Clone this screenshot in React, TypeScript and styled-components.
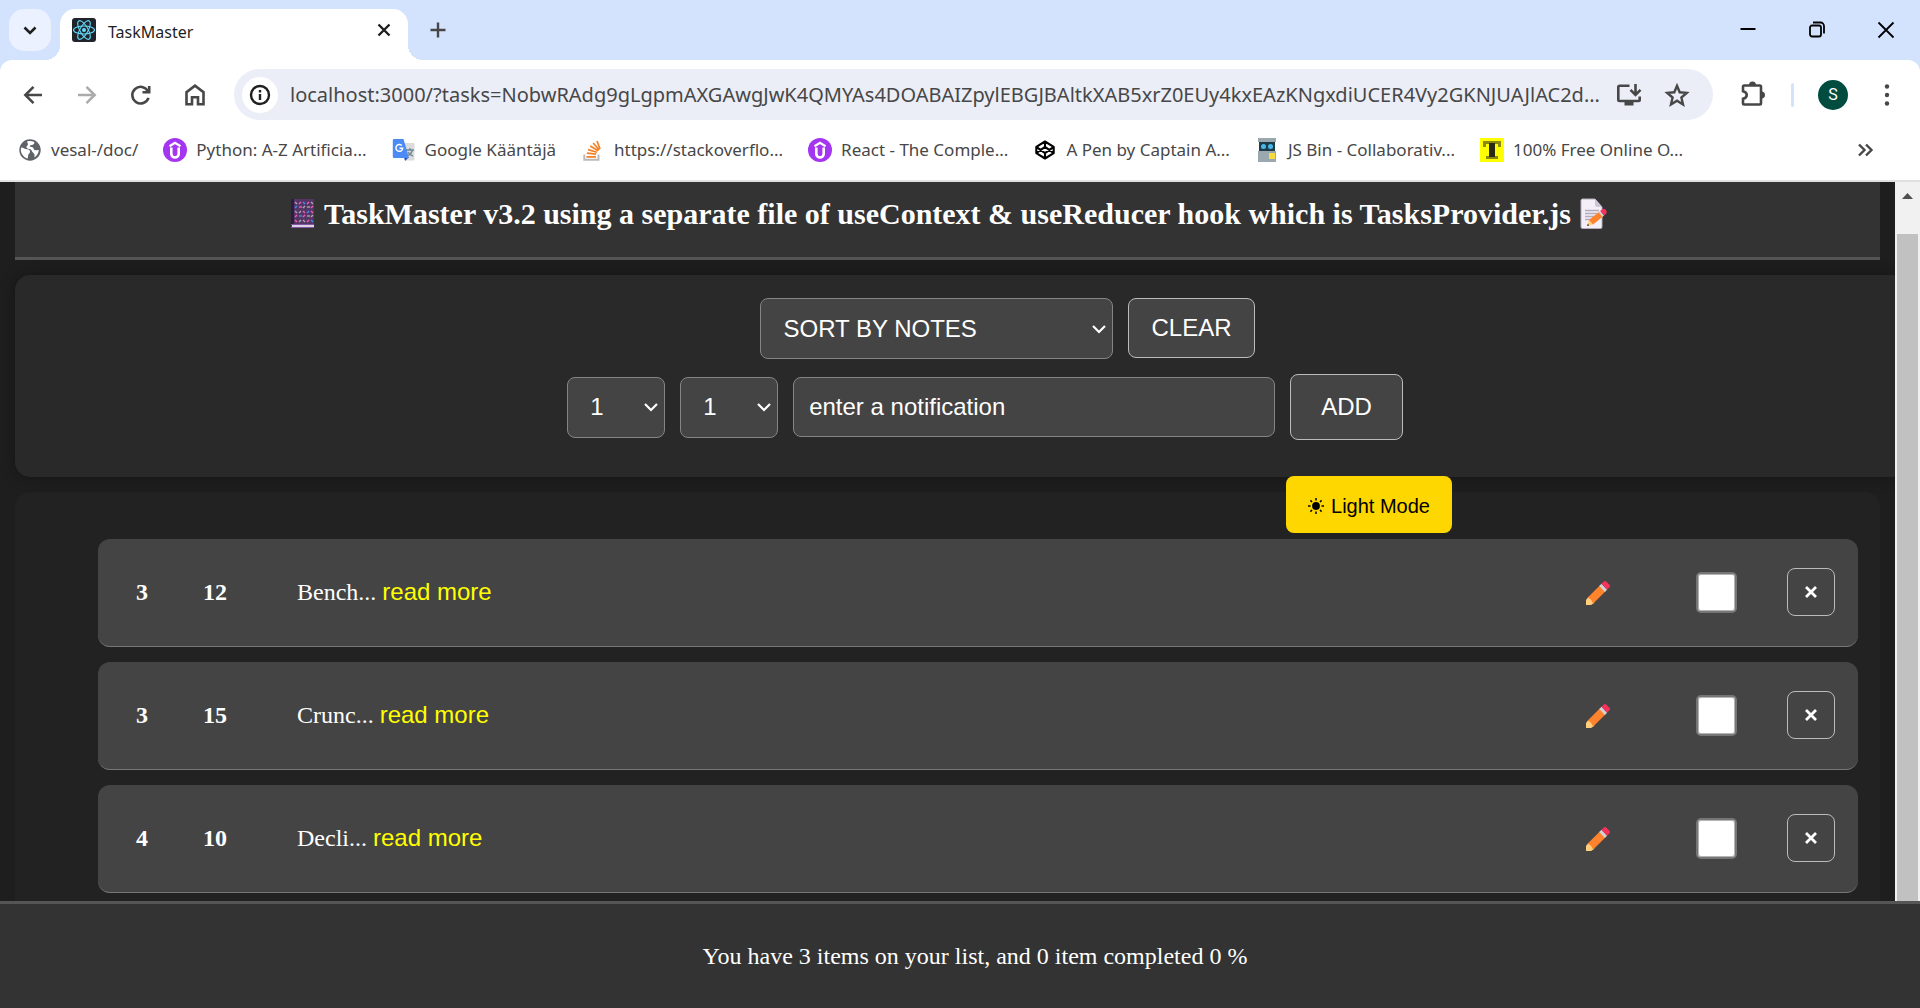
import React from "react";
import styled, { createGlobalStyle } from "styled-components";

const sans = `"Liberation Sans", Arial, sans-serif`;
const serif = `"Liberation Serif", "Times New Roman", serif`;
const chrome = `"Noto Sans", "Segoe UI", sans-serif`;

const GlobalStyle = createGlobalStyle`
  *, *::before, *::after { box-sizing: border-box; }
  body { margin: 0; background: #1e1e1e; }
  button, input, select { font: inherit; color: inherit; margin: 0; }
  button { cursor: pointer; }
  svg { display: block; flex: none; }
`;

const Window = styled.div`
  display: flex;
  flex-direction: column;
  min-height: 100vh;
  overflow: hidden;
`;

/* ---------- browser frame ---------- */

const BrowserFrame = styled.header`
  background: #d3e3fd;
  color: #474747;
  font-family: ${chrome};
`;

const TabStrip = styled.div`
  display: flex;
  align-items: center;
  height: 60px;
  padding-left: 9px;
`;

const PlainButton = styled.button`
  display: flex;
  align-items: center;
  justify-content: center;
  padding: 0;
  border: 0;
  background: none;
`;

const TabSearch = styled(PlainButton)`
  width: 42px;
  height: 42px;
  border-radius: 15px;
  background: #ebf1fe;
  color: #1f1f1f;
`;

const Tab = styled.div`
  position: relative;
  display: flex;
  align-items: center;
  align-self: flex-end;
  width: 348px;
  height: 51px;
  margin-left: 9px;
  padding: 0 12px 9px;
  border-radius: 15px 15px 0 0;
  background: #fff;
  color: #1f1f1f;
  font-size: 16px;

  &::before,
  &::after {
    content: "";
    position: absolute;
    bottom: 0;
    width: 15px;
    height: 15px;
  }
  &::before {
    right: 100%;
    background: radial-gradient(circle at 0 0, transparent 15px, #fff 15px);
  }
  &::after {
    left: 100%;
    background: radial-gradient(circle at 100% 0, transparent 15px, #fff 15px);
  }
`;

const TabTitle = styled.span`
  flex: 1;
  margin-left: 12px;
  padding-top: 3px;
  line-height: 24px;
`;

const TabClose = styled(PlainButton)`
  width: 24px;
  height: 24px;
`;

const NewTab = styled(PlainButton)`
  width: 42px;
  height: 42px;
  margin-left: 9px;
`;

const WindowControls = styled.div`
  display: flex;
  margin-left: auto;
  color: #000;
`;

const WindowButton = styled(PlainButton)`
  width: 69px;
  height: 60px;
`;

const Toolbar = styled.div`
  display: flex;
  align-items: center;
  height: 60px;
  padding: 9px 6px 0;
  border-radius: 12px 12px 0 0;
  background: #fff;
`;

const ToolButton = styled(PlainButton)<{ $faded?: boolean }>`
  width: 54px;
  height: 51px;
  color: ${(p) => (p.$faded ? "#ababab" : "#474747")};
`;

const AddressBar = styled.div`
  display: flex;
  flex: 1;
  align-items: center;
  min-width: 0;
  height: 51px;
  margin: 0 12px;
  padding: 0 12px 0 8px;
  border-radius: 26px;
  background: #ebeef7;
`;

const SiteInfo = styled(PlainButton)`
  width: 36px;
  height: 36px;
  border-radius: 50%;
  background: #fff;
  color: #1f1f1f;
`;

const AddressInput = styled.input`
  flex: 1;
  min-width: 0;
  margin-left: 12px;
  padding: 0;
  border: 0;
  outline: 0;
  background: none;
  font-size: 20px;
`;

const AddressButton = styled(PlainButton)`
  width: 48px;
  height: 48px;
`;

const Divider = styled.span`
  width: 3px;
  height: 24px;
  margin: 0 12px;
  border-radius: 2px;
  background: #d3e3fd;
`;

const Avatar = styled.span`
  display: flex;
  align-items: center;
  justify-content: center;
  width: 30px;
  height: 30px;
  border-radius: 50%;
  background: #004d40;
  color: #fff;
  font: 16px Roboto, sans-serif;
`;

const BookmarkBar = styled.nav`
  display: flex;
  align-items: center;
  height: 62px;
  padding: 0 27px 0 18px;
  border-bottom: 2px solid #e0e0e0;
  background: #fff;
`;

const BookmarkList = styled.ul`
  display: flex;
  flex: 1;
  gap: 25px;
  min-width: 0;
  margin: 0;
  padding: 0;
  list-style: none;
`;

const Bookmark = styled.a`
  display: flex;
  align-items: center;
  gap: 9px;
  color: #474747;
  font-size: 17px;
  line-height: 24px;
  text-decoration: none;
  white-space: nowrap;
`;

/* ---------- page ---------- */

const Viewport = styled.div`
  display: flex;
  flex: 1;
  background: #1e1e1e;
  color: #fff;
`;

const Page = styled.main`
  flex: 1;
  min-width: 0;
  padding: 0 15px;
  overflow: hidden;
`;

const PageHeader = styled.header`
  padding: 15px 0 26px;
  border-bottom: 3px solid #555;
  background: #333;
`;

const Title = styled.h1`
  display: flex;
  align-items: center;
  justify-content: center;
  gap: 7px;
  margin: 0;
  font: bold 30px/34px ${serif};
`;

const Controls = styled.section`
  margin: 15px -75px 0 0;
  padding: 23px 0 37px;
  border-radius: 15px;
  background: #292929;
  box-shadow: 0 0 15px rgba(0, 0, 0, 0.3);
  font: 24px/28px ${sans};
`;

const ControlRow = styled.form<{ $indent?: boolean }>`
  display: flex;
  align-items: ${(p) => (p.$indent ? "flex-start" : "center")};
  justify-content: center;
  gap: 15px;
  padding-left: ${(p) => (p.$indent ? 45 : 0)}px;

  & + & {
    margin-top: 15px;
  }
`;

const SelectBox = styled.label<{ $wide?: boolean }>`
  display: grid;
  align-items: center;
  width: ${(p) => (p.$wide ? 353 : 98)}px;

  > * {
    grid-area: 1 / 1;
  }
  > svg {
    justify-self: end;
    margin-right: 6px;
    pointer-events: none;
  }
`;

const Select = styled.select`
  width: 100%;
  height: 61px;
  padding: 0 22px;
  appearance: none;
  border: 1px solid #858585;
  border-radius: 8px;
  background: #444;
`;

const NoteInput = styled.input`
  width: 482px;
  height: 60px;
  padding: 0 15px;
  border: 1px solid #858585;
  border-radius: 8px;
  background: #444;

  &::placeholder {
    color: #fff;
    opacity: 1;
  }
`;

const ActionButton = styled.button<{ $large?: boolean }>`
  height: ${(p) => (p.$large ? 66 : 60)}px;
  padding: 0 ${(p) => (p.$large ? 30 : 22)}px;
  border: 1px solid #bbb;
  border-radius: 8px;
  background: #444;
`;

const ListPanel = styled.section`
  position: relative;
  margin-top: 15px;
  padding: 47px 22px 8px 83px;
  border-radius: 15px 15px 0 0;
  background: #222;
`;

const ThemeButton = styled.button`
  position: absolute;
  top: -16px;
  right: 428px;
  display: flex;
  align-items: center;
  gap: 7px;
  height: 57px;
  padding: 3px 22px 0;
  border: 0;
  border-radius: 8px;
  background: #ffd700;
  color: #000;
  font: 20px ${sans};
`;

const TaskList = styled.ul`
  display: grid;
  gap: 15px;
  margin: 0;
  padding: 0;
  list-style: none;
`;

const TaskRow = styled.li`
  display: flex;
  align-items: center;
  height: 108px;
  padding: 0 23px 1px 38px;
  border-bottom: 1px solid #777;
  border-radius: 12px;
  background: #444;
  font: 24px/28px ${serif};
`;

const Quantity = styled.strong`
  width: 67px;
`;

const Amount = styled.strong`
  width: 94px;
`;

const Note = styled.p`
  flex: 1;
  margin: 0;
`;

const ReadMore = styled.button`
  padding: 0;
  border: 0;
  background: none;
  color: #ff0;
  font: 24px/28px ${sans};
`;

const EditButton = styled(PlainButton)`
  width: 24px;
  height: 48px;
`;

const Done = styled.input`
  width: 41px;
  height: 41px;
  margin: 0 50px 0 86px;
  appearance: none;
  border: 2px solid #767676;
  border-radius: 5px;
  background: #fff;
  box-shadow: inset 0 0 0 1px #b5b5b5;
`;

const RemoveButton = styled(PlainButton)`
  width: 48px;
  height: 48px;
  border: 1px solid #bbb;
  border-radius: 8px;
`;

const Scrollbar = styled.div`
  width: 25px;
  padding: 0 2px;
  background: #f1f1f1;
  display: flex;
  flex-direction: column;
`;

const ScrollUp = styled(PlainButton)`
  height: 27px;
`;

const ScrollThumb = styled.div`
  flex: 1;
  margin-top: 25px;
  background: #c1c1c1;
`;

const Footer = styled.footer`
  padding: 38px 0 38px 30px;
  border-top: 3px solid #555;
  background: #333;
  color: #fff;
  font: 24px/28px ${serif};
  text-align: center;
`;

/* ---------- icons ---------- */

type IconProps = { size?: number; width?: number; children: React.ReactNode };

const Line = ({ size = 24, width = 2, children }: IconProps) => (
  <svg width={size} height={size} viewBox={`0 0 ${size} ${size}`} fill="none" stroke="currentColor" strokeWidth={width} aria-hidden="true">
    {children}
  </svg>
);

const Chevron = () => (
  <Line size={16}>
    <path d="M2 5l6 6 6-6" strokeWidth="2.2" />
  </Line>
);

const ReactLogo = () => (
  <svg width="24" height="24" viewBox="0 0 24 24" aria-hidden="true">
    <rect width="24" height="24" rx="3" fill="#20232a" />
    <g fill="none" stroke="#61dafb" strokeWidth="1.1" transform="translate(12 12)">
      <ellipse rx="10.500" ry="4" />
      <ellipse rx="10.500" ry="4" transform="rotate(60)" />
      <ellipse rx="10.500" ry="4" transform="rotate(120)" />
      <circle r="2" fill="#61dafb" stroke="none" />
    </g>
  </svg>
);

const GlobeIcon = () => (
  <svg width="24" height="24" viewBox="0 0 24 24" aria-hidden="true">
    <circle cx="12" cy="12" r="10.7" fill="#5f6368" />
    <path d="M3.2 9.6c2.6.2 3.6 1.6 6.2 1.6 1.8.1 3 1.4 2.6 3.1-.4 1.4-1.6 1.5-1.8 2.9-.1 1-.3 2.4-.5 3.4-3.6-1-6.4-4.500-6.900-8.200z" fill="#fff" />
    <path d="M9.200 3.400C11.500 2.700 14.200 2.900 16.300 4c.3 1.800-.7 2.800-2.600 2.900-1.600.1-2 .8-1.900 1.900 2.400-.2 3.500.6 3.900 2.100.5 1.400 2.600 1.300 5.100 1.200-.2 3.200-1.900 5.700-4.400 7.300.5-2.700-.1-3.900-1.500-4.900-1.400-1-.7-2.400-2.100-3.100-1.700-.8-3.800-.3-4.300-1.800-.5-1.700 1.600-1.800 1.500-3.600 0-1-1.100-1.200-.8-2.600z" fill="#fff" />
  </svg>
);

const UdemyIcon = () => (
  <svg width="24" height="24" viewBox="0 0 24 24" aria-hidden="true">
    <circle cx="12" cy="12" r="12" fill="#a435f0" />
    <path d="M6.500 8.200L12 4.700l5.500 3.500" fill="none" stroke="#fff" strokeWidth="2.200" />
    <path d="M8.300 9.500v6.200c0 5 7.400 5 7.400 0V9.500" fill="none" stroke="#fff" strokeWidth="2.600" />
  </svg>
);

const TranslateIcon = () => (
  <svg width="24" height="24" viewBox="0 0 24 24" aria-hidden="true">
    <path d="M9 5h12.500a1 1 0 0 1 1 1v15.500a1 1 0 0 1-1 1H14z" fill="#dcdcdc" />
    <path d="M14 12h8M18 10v2M20.500 12c-.8 3-3 5-5.500 6M16 14c1 2 3 3.500 5 4" stroke="#6e8791" strokeWidth="1.300" fill="none" />
    <path d="M12 19h5l-4 4z" fill="#1a4fc4" />
    <path d="M2 1h9.500l5.500 19H2a1.200 1.200 0 0 1-1.200-1.200V2.200A1.200 1.200 0 0 1 2 1z" fill="#4c8bf5" />
    <path d="M9.800 7.600a3.400 3.400 0 1 0 .9 2.600H7.500" fill="none" stroke="#fff" strokeWidth="1.500" />
  </svg>
);

const StackIcon = () => (
  <svg width="24" height="24" viewBox="0 0 24 24" fill="none" aria-hidden="true">
    <path d="M3.300 16.500v5.300h14.200v-5.300" stroke="#bcbbbb" strokeWidth="2" />
    <path d="M5.500 18.800h9.500M5.800 15.200l9.400 1M7 11.600l9 2.600M9.200 8l8 4.800M12.200 5l6 7M16 3l3 8" stroke="#f48024" strokeWidth="1.700" />
  </svg>
);

const CodepenIcon = () => (
  <svg width="24" height="24" viewBox="-2 0 24 24" fill="none" stroke="#000" strokeWidth="2.100" strokeLinejoin="round" aria-hidden="true">
    <path d="M10 3.500l8.700 5.400v6.200L10 20.500l-8.700-5.400V8.900zM10 3.500v5.400M10 15.100v5.400M1.300 8.900L10 15.100l8.700-6.200M1.300 15.100L10 8.900l8.700 6.200" />
  </svg>
);

const JsBinIcon = () => (
  <svg width="24" height="24" viewBox="-3 0 24 24" aria-hidden="true">
    <path d="M0 0h18v4H0zM0 13h18v11H0z" fill="#9ba8b0" />
    <path d="M1 4h16v9H1z" fill="#1d3c48" />
    <circle cx="5.500" cy="8.500" r="2.500" fill="#49b8e8" />
    <circle cx="12.500" cy="8.500" r="2.500" fill="#49b8e8" />
    <path d="M11 15h6v6h-6z" fill="#f5dc3c" />
  </svg>
);

const TypeIcon = () => (
  <svg width="24" height="24" viewBox="0 0 24 24" aria-hidden="true">
    <path d="M0 0h24v24H0z" fill="#ff0" />
    <path d="M3 3h18v6h-3V6H6v3H3z" fill="#8a8a10" />
    <path d="M6 18h12v3H6z" fill="#8a8a10" />
    <path d="M9 5h6v14H9z" fill="#2b2b14" />
  </svg>
);

const NotebookIcon = () => {
  const tones = ["#a9a4ad", "#f45ea9", "#3f8cf5", "#f45ea9", "#a9a4ad"];
  return (
    <svg width="32" height="34" viewBox="0 0 32 34" aria-hidden="true">
      <rect x="6" y="2" width="23" height="29" rx="1" fill="#533566" />
      <path d="M6 2h3v26H6z" fill="#2f1b41" />
      <path d="M7 28h22v2H7z" fill="#dcd4e4" />
      <path d="M6 27h23v1H6zM6 30h23v1H6z" fill="#8256a3" />
      {[5, 9, 14, 18, 23].map((y, r) =>
        [10, 14, 18, 22, 26].map((x, c) => (
          <path key={`${x}-${y}`} d={(r + c) % 2 ? `M${x} ${y + 2}l2-2` : r % 2 ? `M${x} ${y + 1}h3` : `M${x} ${y}l2 2`} stroke={tones[(r * 2 + c) % 5]} strokeWidth="1.400" />
        )),
      )}
    </svg>
  );
};

const MemoIcon = () => (
  <svg width="32" height="34" viewBox="0 0 32 34" aria-hidden="true">
    <path d="M4 2h13l7 8v20a1.500 1.500 0 0 1-1.500 1.500h-18A1.500 1.500 0 0 1 3 30V3z" fill="#f3eef8" stroke="#b4acbc" />
    <path d="M17 2v6a2 2 0 0 0 2 2h5z" fill="#cdc4d6" />
    <path d="M7 13.500h14M7 16.500h12M7 19.500h10M7 22.500h7" stroke="#b4acbc" strokeWidth="1.300" />
    <path d="M9 29l2-6 4 4.500z" fill="#ffce7c" />
    <path d="M11 23L21.500 14.500l4 4.500L15 27.500z" fill="#ff822d" />
    <path d="M20.500 15.200l1.600-1.300 4 4.600-1.600 1.300z" fill="#d3d3d3" />
    <path d="M22.100 13.900l2.200-1.700c2.600-1.500 5.600 2.200 3.800 4.600l-2 1.700z" fill="#f8315c" />
    <path d="M9 29l.8-2.200 1.500 1.600z" fill="#402a32" />
  </svg>
);

const PencilIcon = () => (
  <svg width="24" height="26" viewBox="0 0 24 26" aria-hidden="true">
    <path d="M0 26v-5l2.500-3.300 6 6L5 26z" fill="#ffce7c" />
    <path d="M1.500 18.800L14 6.200l5.600 6L7 24.800c-1-3.500-2.500-5-5.500-6z" fill="#ff822d" />
    <path d="M13.300 7l2.200-2.200 5.600 5.900-2.200 2.200z" fill="#d3d3d3" />
    <path d="M15.500 4.800l2.300-2.300c.8-.7 1.700-.7 2.400 0l3.200 3.300c.8.800.8 1.700 0 2.500l-2.300 2.400z" fill="#f8315c" />
  </svg>
);

const SunIcon = () => (
  <svg width="16" height="16" viewBox="0 0 16 16" aria-hidden="true">
    <circle cx="8" cy="8" r="3.900" />
    <path d="M8 0v2.500M8 13.500V16M0 8h2.500M13.500 8H16M2.400 2.400L4 4M12 12l1.600 1.600M2.400 13.600L4 12M12 4l1.600-1.600" stroke="#000" strokeWidth="1.500" />
  </svg>
);

/* ---------- data ---------- */

const url =
  "localhost:3000/?tasks=NobwRAdg9gLgpmAXGAwgJwK4QMYAs4DOABAIZpylEBGJBAltkXAB5xrZ0EUy4kxEAzKNgxdiUCER4Vy2GKNJUAJlAC2d...";

const bookmarks = [
  { label: "vesal-/doc/", icon: <GlobeIcon /> },
  { label: "Python: A-Z Artificia...", icon: <UdemyIcon /> },
  { label: "Google Kääntäjä", icon: <TranslateIcon /> },
  { label: "https://stackoverflo...", icon: <StackIcon /> },
  { label: "React - The Comple...", icon: <UdemyIcon /> },
  { label: "A Pen by Captain A...", icon: <CodepenIcon /> },
  { label: "JS Bin - Collaborativ...", icon: <JsBinIcon /> },
  { label: "100% Free Online O...", icon: <TypeIcon /> },
];

const tasks = [
  { quantity: 3, amount: 12, note: "Bench..." },
  { quantity: 3, amount: 15, note: "Crunc..." },
  { quantity: 4, amount: 10, note: "Decli..." },
];

const stop = (e: React.FormEvent) => e.preventDefault();

const NumberSelect = ({ label }: { label: string }) => (
  <SelectBox>
    <Select aria-label={label} defaultValue="1">
      {Array.from({ length: 20 }, (_, i) => (
        <option key={i}>{i + 1}</option>
      ))}
    </Select>
    <Chevron />
  </SelectBox>
);

const Browser = () => (
  <BrowserFrame>
    <TabStrip>
      <TabSearch aria-label="Search tabs">
        <Line size={24} width={2.6}><path d="M6.500 9.500L12 15l5.500-5.500" /></Line>
      </TabSearch>
      <Tab>
        <ReactLogo />
        <TabTitle>TaskMaster</TabTitle>
        <TabClose aria-label="Close tab">
          <Line width={2.4}><path d="M6.500 6.500l11 11M17.500 6.500l-11 11" /></Line>
        </TabClose>
      </Tab>
      <NewTab aria-label="New tab">
        <Line width={2.4}><path d="M12 4.500v15M4.500 12h15" /></Line>
      </NewTab>
      <WindowControls>
        <WindowButton aria-label="Minimize">
          <Line width={2}><path d="M4.500 11h15" /></Line>
        </WindowButton>
        <WindowButton aria-label="Restore">
          <Line width={1.8}>
            <rect x="5" y="7.500" width="11" height="11" rx="2" />
            <path d="M8 4.500h7.500a3.500 3.500 0 0 1 3.500 3.500v7.500" />
          </Line>
        </WindowButton>
        <WindowButton aria-label="Close window">
          <Line width={1.8}><path d="M4.500 4.500l15 15M19.500 4.500l-15 15" /></Line>
        </WindowButton>
      </WindowControls>
    </TabStrip>
    <Toolbar>
      <ToolButton aria-label="Back">
        <Line width={2.5}><path d="M21 12H5M12.500 3.800L4.300 12l8.200 8.200" /></Line>
      </ToolButton>
      <ToolButton aria-label="Forward" $faded>
        <Line width={2.5}><path d="M3 12h16M11.500 3.800l8.200 8.200-8.200 8.200" /></Line>
      </ToolButton>
      <ToolButton aria-label="Reload">
        <Line width={2.6}>
          <path d="M19.500 14.800A8.300 8.300 0 1 1 19 8.300M20.200 3v6.200H13.500" />
        </Line>
      </ToolButton>
      <ToolButton aria-label="Home">
        <Line width={2.6}><path d="M3.500 21.200V9.200L12 2.700l8.500 6.500v12h-5.500v-7H9v7z" /></Line>
      </ToolButton>
      <AddressBar>
        <SiteInfo aria-label="View site information">
          <Line width={2.4}>
            <circle cx="12" cy="12" r="9" />
            <path d="M12 11v6M12 7v2.400" />
          </Line>
        </SiteInfo>
        <AddressInput aria-label="Address" defaultValue={url} spellCheck={false} />
        <AddressButton aria-label="Install app">
          <Line size={28} width={2.6}>
            <path d="M14.500 4.700H4.500a1.200 1.200 0 0 0-1.200 1.200v12.900A1.200 1.200 0 0 0 4.500 20h19a1.200 1.200 0 0 0 1.200-1.200V15.500M20.500 3v10.500M15.500 8.800l5 5 5-5" />
            <path d="M9.500 20h9v4.500h-9z" fill="currentColor" stroke="none" />
          </Line>
        </AddressButton>
        <AddressButton aria-label="Bookmark this tab">
          <Line size={28} width={2.400}>
            <path d="M14 4.800l2.700 6.500 7 .6-5.300 4.600 1.600 6.900-6-3.700-6 3.700 1.600-6.900-5.300-4.600 7-.6z" />
          </Line>
        </AddressButton>
      </AddressBar>
      <ToolButton aria-label="Extensions">
        <Line size={28} width={2.6}>
          <path d="M6.200 4.500h15.600a1.200 1.200 0 0 1 1.200 1.200v16.600a1.200 1.200 0 0 1-1.200 1.200H6.200A1.200 1.200 0 0 1 5 22.300v-4.500c5-1 5-6.600 0-7.600V5.700a1.200 1.200 0 0 1 1.200-1.200z" />
          <path d="M11 4a3.500 3.500 0 0 1 7 0zM23.500 10.500a3.500 3.500 0 0 1 0 7z" fill="currentColor" stroke="none" />
        </Line>
      </ToolButton>
      <Divider />
      <ToolButton aria-label="Profile"><Avatar>S</Avatar></ToolButton>
      <ToolButton aria-label="Menu">
        <Line>
          <g fill="currentColor" stroke="none">
            <circle cx="12" cy="3.500" r="2.200" />
            <circle cx="12" cy="12" r="2.200" />
            <circle cx="12" cy="20.500" r="2.200" />
          </g>
        </Line>
      </ToolButton>
    </Toolbar>
    <BookmarkBar aria-label="Bookmarks">
      <BookmarkList>
        {bookmarks.map((b) => (
          <li key={b.label}>
            <Bookmark href="#">{b.icon}<span>{b.label}</span></Bookmark>
          </li>
        ))}
      </BookmarkList>
      <ToolButton aria-label="More bookmarks">
        <Line width={2.4}><path d="M5 6.500l5.500 5.500L5 17.500M12 6.500l5.500 5.500-5.500 5.500" /></Line>
      </ToolButton>
    </BookmarkBar>
  </BrowserFrame>
);

export default function App() {
  return (
    <Window>
      <GlobalStyle />
      <Browser />
      <Viewport>
        <Page>
          <PageHeader>
            <Title>
              <NotebookIcon />
              TaskMaster v3.2 using a separate file of useContext &amp; useReducer hook which is TasksProvider.js
              <MemoIcon />
            </Title>
          </PageHeader>
          <Controls>
            <ControlRow $indent onSubmit={stop}>
              <SelectBox $wide>
                <Select aria-label="Sort order">
                  <option>SORT BY NOTES</option>
                </Select>
                <Chevron />
              </SelectBox>
              <ActionButton type="button">CLEAR</ActionButton>
            </ControlRow>
            <ControlRow onSubmit={stop}>
              <NumberSelect label="Quantity" />
              <NumberSelect label="Amount" />
              <NoteInput aria-label="Notification" placeholder="enter a notification" />
              <ActionButton $large>ADD</ActionButton>
            </ControlRow>
          </Controls>
          <ListPanel>
            <TaskList>
              {tasks.map((t) => (
                <TaskRow key={t.note}>
                  <Quantity>{t.quantity}</Quantity>
                  <Amount>{t.amount}</Amount>
                  <Note>
                    {t.note} <ReadMore>read more</ReadMore>
                  </Note>
                  <EditButton aria-label="Edit"><PencilIcon /></EditButton>
                  <Done type="checkbox" aria-label={`Completed ${t.note}`} />
                  <RemoveButton aria-label="Remove">
                    <Line size={14} width={2.8}><path d="M2 2l10 10M12 2L2 12" /></Line>
                  </RemoveButton>
                </TaskRow>
              ))}
            </TaskList>
            <ThemeButton>
              <SunIcon />
              Light Mode
            </ThemeButton>
          </ListPanel>
        </Page>
        <Scrollbar>
          <ScrollUp aria-label="Scroll up">
            <svg width="11" height="6" viewBox="0 0 11 6" aria-hidden="true"><path d="M0 6l5.500-6L11 6z" fill="#505050" /></svg>
          </ScrollUp>
          <ScrollThumb />
        </Scrollbar>
      </Viewport>
      <Footer>You have 3 items on your list, and 0 item completed 0 %</Footer>
    </Window>
  );
}
